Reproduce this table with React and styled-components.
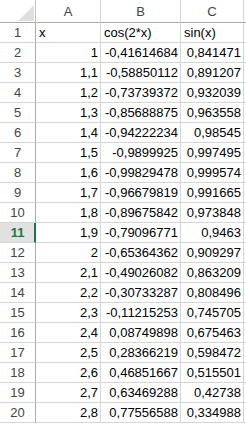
import React from "react";
import styled, { createGlobalStyle } from "styled-components";

const Global = createGlobalStyle`
  html, body { margin: 0; padding: 0; background: #fff; }
  body { width: 246px; height: 424px; overflow: hidden; }
`;

const Sheet = styled.div`
  display: grid;
  grid-template-columns: 36px 65px 80px 63px 40px;
  grid-template-rows: 23px repeat(20, 20px);
  font-family: "Liberation Sans", Arial, sans-serif;
  font-size: 13px;
  color: #000;
  width: 246px;
  height: 424px;
  overflow: hidden;
`;

const Corner = styled.div`
  position: relative;
  border-right: 1px solid #c6c6c6;
  border-bottom: 1px solid #ababab;
  background: #fff;
`;

const Triangle = styled.svg`
  position: absolute;
  right: 1px;
  bottom: 1px;
`;

const ColHead = styled.div`
  display: flex;
  align-items: flex-end;
  justify-content: center;
  padding-bottom: 3px;
  box-sizing: border-box;
  color: #444;
  border-right: 1px solid #d5d5d5;
  border-bottom: 1px solid #ababab;
  background: #fff;
`;

const RowHead = styled.div`
  display: flex;
  align-items: flex-end;
  justify-content: center;
  padding-bottom: 2px;
  box-sizing: border-box;
  color: ${(p) => (p.$active ? "#217346" : "#444")};
  font-weight: ${(p) => (p.$active ? "bold" : "normal")};
  background: ${(p) => (p.$active ? "#e1e1e1" : "#fff")};
  border-right: ${(p) => (p.$active ? "2px solid #217346" : "1px solid #ababab")};
  border-bottom: 1px solid #d5d5d5;
  padding-left: ${(p) => (p.$active ? "1px" : "0")};
`;

const Cell = styled.div`
  display: flex;
  align-items: flex-end;
  justify-content: ${(p) => (p.$num ? "flex-end" : "flex-start")};
  padding: 0 2px 2px 3px;
  box-sizing: border-box;
  white-space: nowrap;
  overflow: hidden;
  border-right: 1px solid #d5d5d5;
  border-bottom: 1px solid #d5d5d5;
`;

const rows = [
  ["1", "-0,41614684", "0,841471"],
  ["1,1", "-0,58850112", "0,891207"],
  ["1,2", "-0,73739372", "0,932039"],
  ["1,3", "-0,85688875", "0,963558"],
  ["1,4", "-0,94222234", "0,98545"],
  ["1,5", "-0,9899925", "0,997495"],
  ["1,6", "-0,99829478", "0,999574"],
  ["1,7", "-0,96679819", "0,991665"],
  ["1,8", "-0,89675842", "0,973848"],
  ["1,9", "-0,79096771", "0,9463"],
  ["2", "-0,65364362", "0,909297"],
  ["2,1", "-0,49026082", "0,863209"],
  ["2,2", "-0,30733287", "0,808496"],
  ["2,3", "-0,11215253", "0,745705"],
  ["2,4", "0,08749898", "0,675463"],
  ["2,5", "0,28366219", "0,598472"],
  ["2,6", "0,46851667", "0,515501"],
  ["2,7", "0,63469288", "0,42738"],
  ["2,8", "0,77556588", "0,334988"],
];

export default function App() {
  return (
    <>
      <Global />
      <Sheet>
        <Corner>
          <Triangle width="16" height="16" viewBox="0 0 16 16">
            <polygon points="16,0 16,16 0,16" fill="#dfdfdf" />
          </Triangle>
        </Corner>
        <ColHead>A</ColHead>
        <ColHead>B</ColHead>
        <ColHead>C</ColHead>
        <ColHead />

        <RowHead>1</RowHead>
        <Cell>x</Cell>
        <Cell>cos(2*x)</Cell>
        <Cell>sin(x)</Cell>
        <Cell />

        {rows.map((r, i) => (
          <React.Fragment key={i}>
            <RowHead $active={i + 2 === 11}>{i + 2}</RowHead>
            <Cell $num>{r[0]}</Cell>
            <Cell $num>{r[1]}</Cell>
            <Cell $num>{r[2]}</Cell>
            <Cell />
          </React.Fragment>
        ))}
      </Sheet>
    </>
  );
}
